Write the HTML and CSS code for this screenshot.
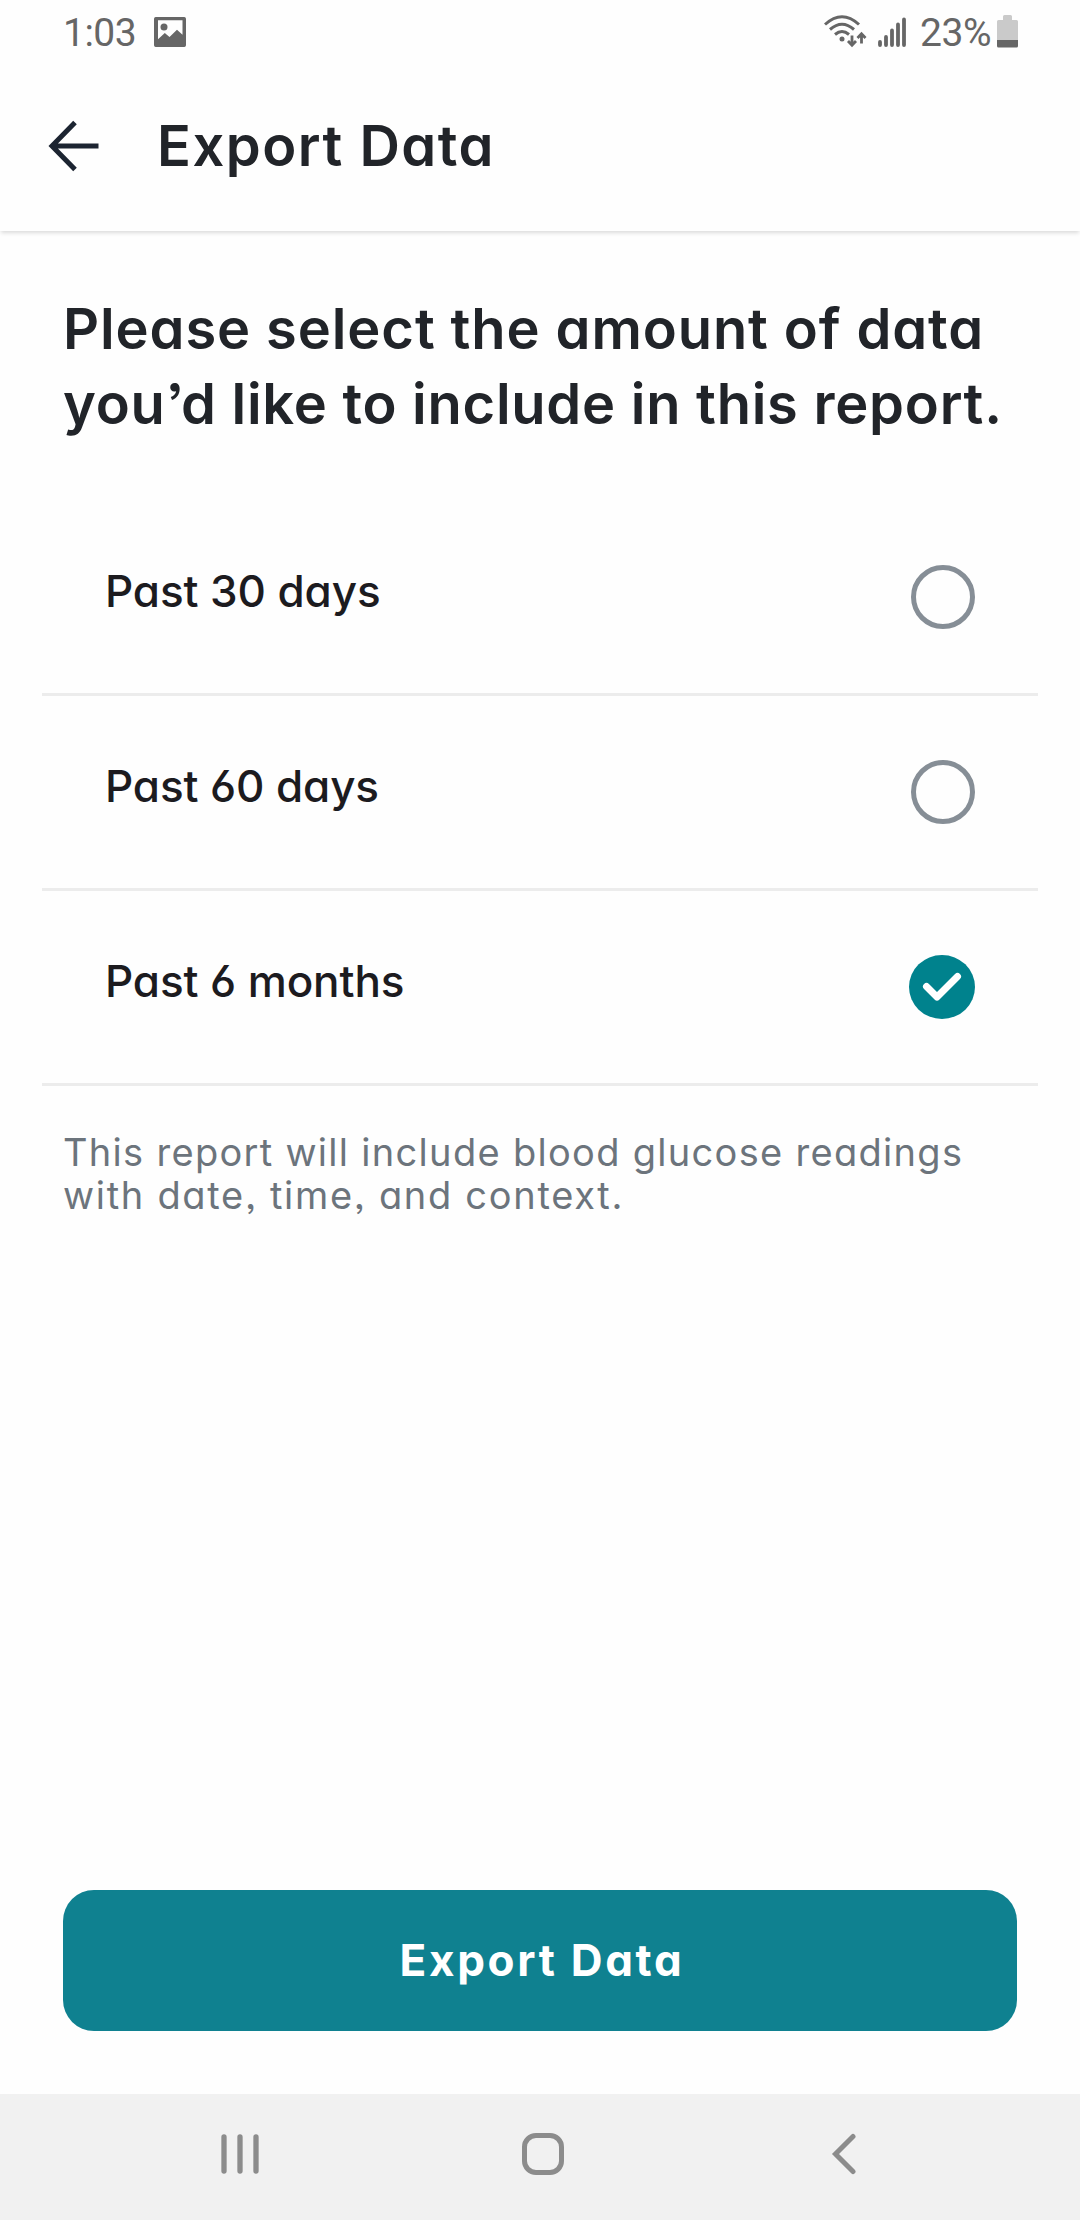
FILE: index.html
```html
<!DOCTYPE html>
<html lang="en">
<head>
<meta charset="UTF-8">
<meta name="viewport" content="width=device-width, initial-scale=1.0">
<title>Export Data</title>
<link rel="stylesheet" href="styles.css">
</head>
<body>
    <div class="screen">

        <div class="status-bar">
            <span class="clock">1:03</span>
            <svg class="photo-icon" width="32" height="30" viewBox="0 0 32 30">
                <path fill="#666" fill-rule="evenodd" d="M2.5 0h27A2.3 2.3 0 0 1 32 2.5v25a2.3 2.3 0 0 1-2.5 2.5h-27A2.3 2.3 0 0 1 0 27.500v-25A2.300 2.300 0 0 1 2.500 0zM4 3.300v19l6.800-6.300 4.700 4L23 12.700l5.500 5V3.300z"/>
                <circle cx="10" cy="10" r="3.500" fill="#666"/>
            </svg>
            <div class="status-right">
                <svg width="43" height="33" viewBox="0 0 43 33" fill="none" stroke="#666" stroke-width="3">
                    <path d="M1 9.500Q18-6 35 9.500M6 14.500q12-10.500 24 0M11 19.500q7-6 14 0"/>
                    <circle cx="18" cy="24" r="2.500" fill="#666" stroke="none"/>
                    <path stroke-width="2.800" d="M28 20.500v9M24 26l4 4.200 4-4.200M37.500 28.500v-9M33.500 23l4-4.200 4 4.200"/>
                </svg>
                <svg class="signal" width="28" height="30" viewBox="0 0 28 30" stroke="#666" stroke-width="3.800" stroke-linecap="round">
                    <path d="M2 25v3M8 20v8M14 13.500V28M20 7.500V28M26 2.500V28"/>
                </svg>
                <span class="percent">23%</span>
                <svg class="battery" width="21" height="33" viewBox="0 0 21 33">
                    <path fill="#cacaca" d="M6 1.500Q6 0 7.500 0h6Q15 0 15 1.500V5h4.500Q21 5 21 6.500V25H0V6.500Q0 5 1.500 5H6z"/>
                    <path fill="#666" d="M0 25h21v6q0 1.500-1.500 1.500h-18Q0 32.500 0 31z"/>
                </svg>
            </div>
        </div>

        <div class="header">
            <svg class="back-arrow" width="52" height="52" viewBox="0 0 52 52" fill="none" stroke="#1c2431" stroke-width="5">
                <path d="M27 2.500L4 26l23 23.500M4 26h46.500"/>
            </svg>
            <h1>Export Data</h1>
        </div>

        <div class="content">
            <h2>Please select the amount of data<br><span class="tight">you’d like to include in this report.</span></h2>

            <div class="options">
                <div class="option">
                    <span class="label">Past 30 days</span>
                    <div class="radio"></div>
                </div>
                <div class="option">
                    <span class="label">Past 60 days</span>
                    <div class="radio"></div>
                </div>
                <div class="option">
                    <span class="label">Past 6 months</span>
                    <svg class="checked" width="66" height="64" viewBox="0 0 66 64">
                        <ellipse cx="33" cy="32" rx="33" ry="32" fill="#00828d"/>
                        <path d="M17.500 31.500L28 42l20.500-20.500" fill="none" stroke="#fff" stroke-width="7" stroke-linecap="round" stroke-linejoin="round"/>
                    </svg>
                </div>
            </div>

            <p class="note">This report will include blood glucose readings<br><span class="loose">with date, time, and context.</span></p>

            <button class="export-btn">Export Data</button>
        </div>

        <div class="nav-bar">
            <svg width="42" height="42" viewBox="0 0 42 42" stroke="#8c8c8c" stroke-width="5.300" stroke-linecap="round">
                <path d="M5 4v34M21 4v34M37 4v34"/>
            </svg>
            <div class="home"></div>
            <svg width="42" height="42" viewBox="0 0 42 42" fill="none" stroke="#8c8c8c" stroke-width="5" stroke-linecap="round">
                <path d="M29 3.500L11.500 21 29 38.500"/>
            </svg>
        </div>

    </div>
</body>
</html>
```
FILE: styles.css
```css
* {
    box-sizing: border-box;
}

body {
    margin: 0;
    background-color: #fefefe;
    font-family: Inter, "Liberation Sans", sans-serif;
    font-feature-settings: "cv11", "cv03", "ss03";
}

.screen {
    display: flex;
    flex-direction: column;
    width: 1080px;
    height: 2220px;
}

/* status bar */
.status-bar {
    display: flex;
    align-items: center;
    height: 63px;
    padding: 0 62px 0 63px;
    font-family: Roboto, sans-serif;
    font-size: 39px;
    letter-spacing: -0.5px;
    color: #666;
}

.clock, .percent {
    line-height: 66px;
    padding-top: 3px;
}

.photo-icon {
    margin-left: 18px;
}

.status-right {
    display: flex;
    align-items: center;
    margin-left: auto;
}

.signal {
    margin-left: 11px;
}

.percent {
    margin-left: 14px;
}

.battery {
    margin-left: 6px;
}

/* header */
.header {
    display: flex;
    align-items: center;
    height: 168px;
    padding: 0 0 2px 48px;
    box-shadow: 0 3px 4px -1px rgba(0, 0, 0, 0.14);
}

h1 {
    margin: 0 0 0 57px;
    font-size: 56px;
    font-weight: 560;
    letter-spacing: 1.5px;
    color: #212429;
}

/* content */
.content {
    flex: 1;
    display: flex;
    flex-direction: column;
    padding: 61px 63px 63px;
}

h2 {
    margin: 0;
    font-size: 56px;
    font-weight: 560;
    line-height: 75px;
    letter-spacing: 0.9px;
    white-space: nowrap;
    color: #212429;
}

.tight {
    letter-spacing: 0.75px;
}

.options {
    margin: 59px -21px 0;
}

.option {
    display: flex;
    justify-content: space-between;
    align-items: center;
    height: 195px;
    padding: 0 63px;
    border-bottom: 3px solid #ececec;
    font-size: 44px;
    font-weight: 500;
    letter-spacing: -0.1px;
    color: #1c1b1f;
}

.label {
    padding-bottom: 12px;
}

.radio {
    width: 64px;
    height: 64px;
    border: 5px solid #868e96;
    border-radius: 50%;
}

.note {
    margin: 45px 0 0;
    font-size: 38px;
    line-height: 43px;
    letter-spacing: 1.3px;
    white-space: nowrap;
    color: #6c747c;
}

.loose {
    letter-spacing: 1.7px;
}

.export-btn {
    height: 141px;
    margin-top: auto;
    padding: 0 0 2px 4px;
    border: none;
    border-radius: 31px;
    background-color: #0f8190;
    color: #fff;
    font: inherit;
    font-feature-settings: inherit;
    font-size: 44px;
    font-weight: 700;
    letter-spacing: 2.7px;
}

/* navigation bar */
.nav-bar {
    display: flex;
    justify-content: space-between;
    align-items: center;
    height: 126px;
    padding: 0 214px 6px 219px;
    background-color: #f1f1f1;
}

.home {
    width: 42px;
    height: 42px;
    border: 5px solid #8c8c8c;
    border-radius: 14px;
}
```
